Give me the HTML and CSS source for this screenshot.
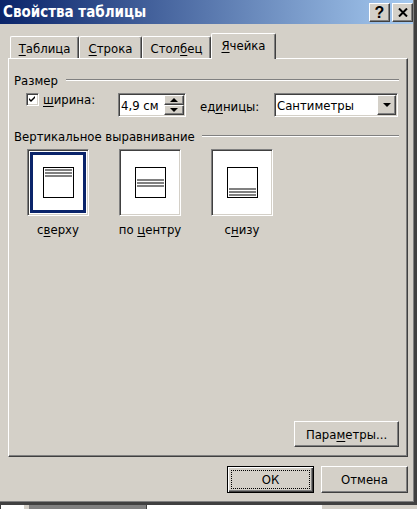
FILE: index.html
```html
<!DOCTYPE html>
<html lang="ru">
<head>
  <meta charset="UTF-8">
  <title>Свойства таблицы</title>
  <link rel="stylesheet" href="styles.css">
</head>
<body>
  <div class="window">
    <div class="frame">
      <div class="titlebar">
        <span class="title">Свойства таблицы</span>
        <div class="caption-buttons">
          <button class="cap-btn help-btn">?</button>
          <button class="cap-btn">
            <svg width="10" height="9" viewBox="0 0 10 9">
              <path d="M1 0.5 L9 8.5 M9 0.5 L1 8.5" stroke="#000" stroke-width="2"/>
            </svg>
          </button>
        </div>
      </div>

      <div class="body">
        <div class="tabs">
          <div class="tab"><u>Т</u>аблица</div>
          <div class="tab"><u>С</u>трока</div>
          <div class="tab">Стол<u>б</u>ец</div>
          <div class="tab active"><u>Я</u>чейка</div>
        </div>

        <div class="panel">
          <div class="group-title">Размер</div>
          <div class="size-row">
            <label class="check-label">
              <span class="checkbox">
                <svg width="7" height="7" viewBox="0 0 7 7">
                  <path d="M0 2 L2 4 L6 0 L6 2 L2 6 L0 4 Z" fill="#000"/>
                </svg>
              </span>
              <span><u>ш</u>ирина:</span>
            </label>
            <div class="spin">
              <span class="field-value">4,9 см</span>
              <div class="spin-buttons">
                <span class="spin-btn up"></span>
                <span class="spin-btn down"></span>
              </div>
            </div>
            <span class="units-label">ед<u>и</u>ницы:</span>
            <div class="select">
              <span class="field-value">Сантиметры</span>
              <span class="select-btn"></span>
            </div>
          </div>

          <div class="group-title second">Вертикальное выравнивание</div>
          <div class="align-row">
            <div class="align-option">
              <div class="align-btn">
                <div class="align-frame selected">
                  <div class="cell top"><i></i><i></i><i></i></div>
                </div>
              </div>
              <span class="align-label">с<u>в</u>ерху</span>
            </div>
            <div class="align-option">
              <div class="align-btn">
                <div class="align-frame">
                  <div class="cell middle"><i></i><i></i><i></i></div>
                </div>
              </div>
              <span class="align-label">по <u>ц</u>ентру</span>
            </div>
            <div class="align-option">
              <div class="align-btn">
                <div class="align-frame">
                  <div class="cell bottom"><i></i><i></i><i></i></div>
                </div>
              </div>
              <span class="align-label">с<u>н</u>изу</span>
            </div>
          </div>

          <div class="panel-footer">
            <button class="btn params-btn">Пара<u>м</u>етры...</button>
          </div>
        </div>

        <div class="dialog-buttons">
          <button class="btn dialog-btn default"><span class="focus-ring">ОК</span></button>
          <button class="btn dialog-btn">Отмена</button>
        </div>
      </div>
    </div>
  </div>

  <div class="desktop-strip">
    <span class="seg dark" style="width:1px"></span>
    <span class="seg white" style="width:23px"></span>
    <span class="seg face" style="width:5px"></span>
    <span class="seg shadow" style="width:117px"></span>
    <span class="seg dark" style="width:1px"></span>
    <span class="seg white" style="width:175px"></span>
    <span class="seg face" style="width:95px"></span>
  </div>
</body>
</html>
```

FILE: styles.css
```css
* {
  box-sizing: border-box;
}

body {
  margin: 0;
  background-color: #d4d0c8;
  font-family: "DejaVu Sans Condensed", "DejaVu Sans", Tahoma, sans-serif;
  font-size: 13px;
  color: #000;
  overflow: hidden;
}

button {
  font: inherit;
  color: inherit;
  padding: 0;
  margin: 0;
  background-color: #d4d0c8;
}

u {
  text-decoration-thickness: 1px;
  text-underline-offset: 2px;
}

.window {
  width: 417px;
  height: 505px;
  border-right: 3px solid #404040;
  border-bottom: 3px solid #404040;
}

.frame {
  height: 100%;
  display: flex;
  flex-direction: column;
  border-right: 1px solid #808080;
  border-bottom: 1px solid #808080;
}

.titlebar {
  height: 24px;
  display: flex;
  align-items: center;
  justify-content: space-between;
  padding-left: 3px;
  background: linear-gradient(to right, #0a246a, #a6caf0);
}

.title {
  color: #fff;
  font-weight: bold;
  font-size: 15px;
}

.caption-buttons {
  display: flex;
  gap: 2px;
  margin-top: 1px;
}

.cap-btn {
  width: 21px;
  height: 19px;
  display: flex;
  align-items: center;
  justify-content: center;
  border: 1px solid;
  border-color: #fff #404040 #404040 #fff;
  box-shadow: inset -1px -1px #808080;
}

.help-btn {
  font-family: "Liberation Sans", Arial, sans-serif;
  font-weight: bold;
  font-size: 16px;
  line-height: 1;
}

.body {
  flex: 1;
  display: flex;
  flex-direction: column;
  padding: 9px 5px 0 8px;
}

/* tabs */

.tabs {
  display: flex;
  align-items: flex-end;
  height: 25px;
  margin-left: 2px;
}

.tab {
  height: 22px;
  display: flex;
  align-items: center;
  justify-content: center;
  padding-top: 2px;
  border: 1px solid #fff;
  border-right-color: #404040;
  border-bottom: 0;
  border-radius: 2px 2px 0 0;
  box-shadow: inset -1px 0 #808080;
  background-color: #d4d0c8;
}

.tab:nth-child(1) { width: 69px; }
.tab:nth-child(2) { width: 63px; }
.tab:nth-child(3) { width: 69px; }
.tab:nth-child(4) { width: 65px; }

.tab.active {
  height: 26px;
  margin-bottom: -1px;
  padding-top: 0;
  padding-bottom: 3px;
  position: relative;
  z-index: 1;
}

/* panel */

.panel {
  width: 400px;
  height: 399px;
  display: flex;
  flex-direction: column;
  padding: 13px 8px 9px 5px;
  border: 1px solid;
  border-color: #fff #404040 #404040 #fff;
  box-shadow: inset -1px -1px #808080;
}

.group-title {
  height: 16px;
  display: flex;
  align-items: center;
  gap: 8px;
  white-space: nowrap;
}

.group-title::after {
  content: "";
  flex: 1;
  border-top: 1px solid #808080;
  border-bottom: 1px solid #fff;
}

.group-title.second {
  margin-top: 11px;
  gap: 7px;
}

.size-row {
  display: flex;
  align-items: center;
  height: 24px;
  margin-top: 5px;
  padding-left: 12px;
}

.check-label {
  width: 92px;
  display: flex;
  align-items: center;
  gap: 4px;
  align-self: flex-start;
  margin-top: -1px;
}

.checkbox {
  width: 13px;
  height: 13px;
  display: flex;
  align-items: center;
  justify-content: center;
  background-color: #fff;
  border: 1px solid;
  border-color: #808080 #fff #fff #808080;
  box-shadow: inset 1px 1px #404040, inset -1px -1px #d4d0c8;
}

.spin,
.select {
  height: 24px;
  display: flex;
  padding: 1px;
  background-color: #fff;
  border: 1px solid;
  border-color: #808080 #fff #fff #808080;
  box-shadow: inset 1px 1px #404040, inset -1px -1px #d4d0c8;
}

.spin {
  width: 68px;
}

.select {
  width: 124px;
}

.field-value {
  flex: 1;
  display: flex;
  align-items: center;
  padding-left: 1px;
  padding-top: 1px;
}

.spin-buttons {
  width: 20px;
  display: flex;
  flex-direction: column;
}

.spin-btn,
.select-btn {
  display: flex;
  align-items: center;
  justify-content: center;
  background-color: #d4d0c8;
  border: 1px solid;
  border-color: #fff #404040 #404040 #fff;
  box-shadow: inset -1px -1px #808080;
}

.spin-btn {
  flex: 1;
}

.spin-btn::before,
.select-btn::before {
  content: "";
  border-left: 4px solid transparent;
  border-right: 4px solid transparent;
}

.spin-btn.up::before {
  border-bottom: 4px solid #000;
}

.spin-btn.down::before {
  border-top: 4px solid #000;
}

.select-btn {
  width: 19px;
}

.select-btn::before {
  border-top: 4px solid #000;
}

.units-label {
  width: 74px;
  margin-left: 14px;
  padding-top: 2px;
}

/* vertical alignment choices */

.align-row {
  display: flex;
  gap: 30px;
  margin-top: 5px;
  padding-left: 13px;
}

.align-option {
  width: 62px;
  display: flex;
  flex-direction: column;
  align-items: center;
  gap: 6px;
}

.align-btn {
  width: 62px;
  height: 67px;
  display: flex;
  padding: 2px;
  background-color: #fff;
  border: 1px solid;
  border-color: #808080 #fff #fff #808080;
  box-shadow: inset 1px 1px #404040, inset -1px -1px #d4d0c8;
}

.align-frame {
  flex: 1;
  display: flex;
  align-items: center;
  justify-content: center;
  border: 3px solid transparent;
}

.align-frame.selected {
  border-color: #0a246a;
}

.cell {
  width: 31px;
  height: 31px;
  display: flex;
  flex-direction: column;
  gap: 1px;
  padding: 1px;
  border: 1px solid #000;
  background-color: #fff;
}

.cell i {
  display: block;
  height: 2px;
  background-color: #808080;
}

.cell.middle {
  justify-content: center;
}

.cell.bottom {
  justify-content: flex-end;
}

.align-label {
  line-height: 16px;
  white-space: nowrap;
}

/* buttons */

.btn {
  display: flex;
  align-items: center;
  justify-content: center;
  border: 1px solid;
  border-color: #fff #404040 #404040 #fff;
  box-shadow: inset -1px -1px #808080;
}

.panel-footer {
  margin-top: auto;
  display: flex;
  justify-content: flex-end;
}

.params-btn {
  width: 105px;
  height: 26px;
}

.dialog-buttons {
  display: flex;
  justify-content: flex-end;
  gap: 7px;
  margin-top: 9px;
}

.dialog-btn {
  width: 87px;
  height: 27px;
}

.dialog-btn.default {
  padding: 3px;
  border-color: #000;
  box-shadow: inset 1px 1px #fff, inset -1px -1px #404040, inset -2px -2px #808080;
}

.focus-ring {
  flex: 1;
  align-self: stretch;
  display: flex;
  align-items: center;
  justify-content: center;
  border: 1px dotted #000;
}

/* what shows of the window underneath */

.desktop-strip {
  display: flex;
  height: 4px;
}

.seg.dark { background-color: #404040; }
.seg.white { background-color: #fff; }
.seg.face { background-color: #d4d0c8; }
.seg.shadow { background-color: #808080; }
```
